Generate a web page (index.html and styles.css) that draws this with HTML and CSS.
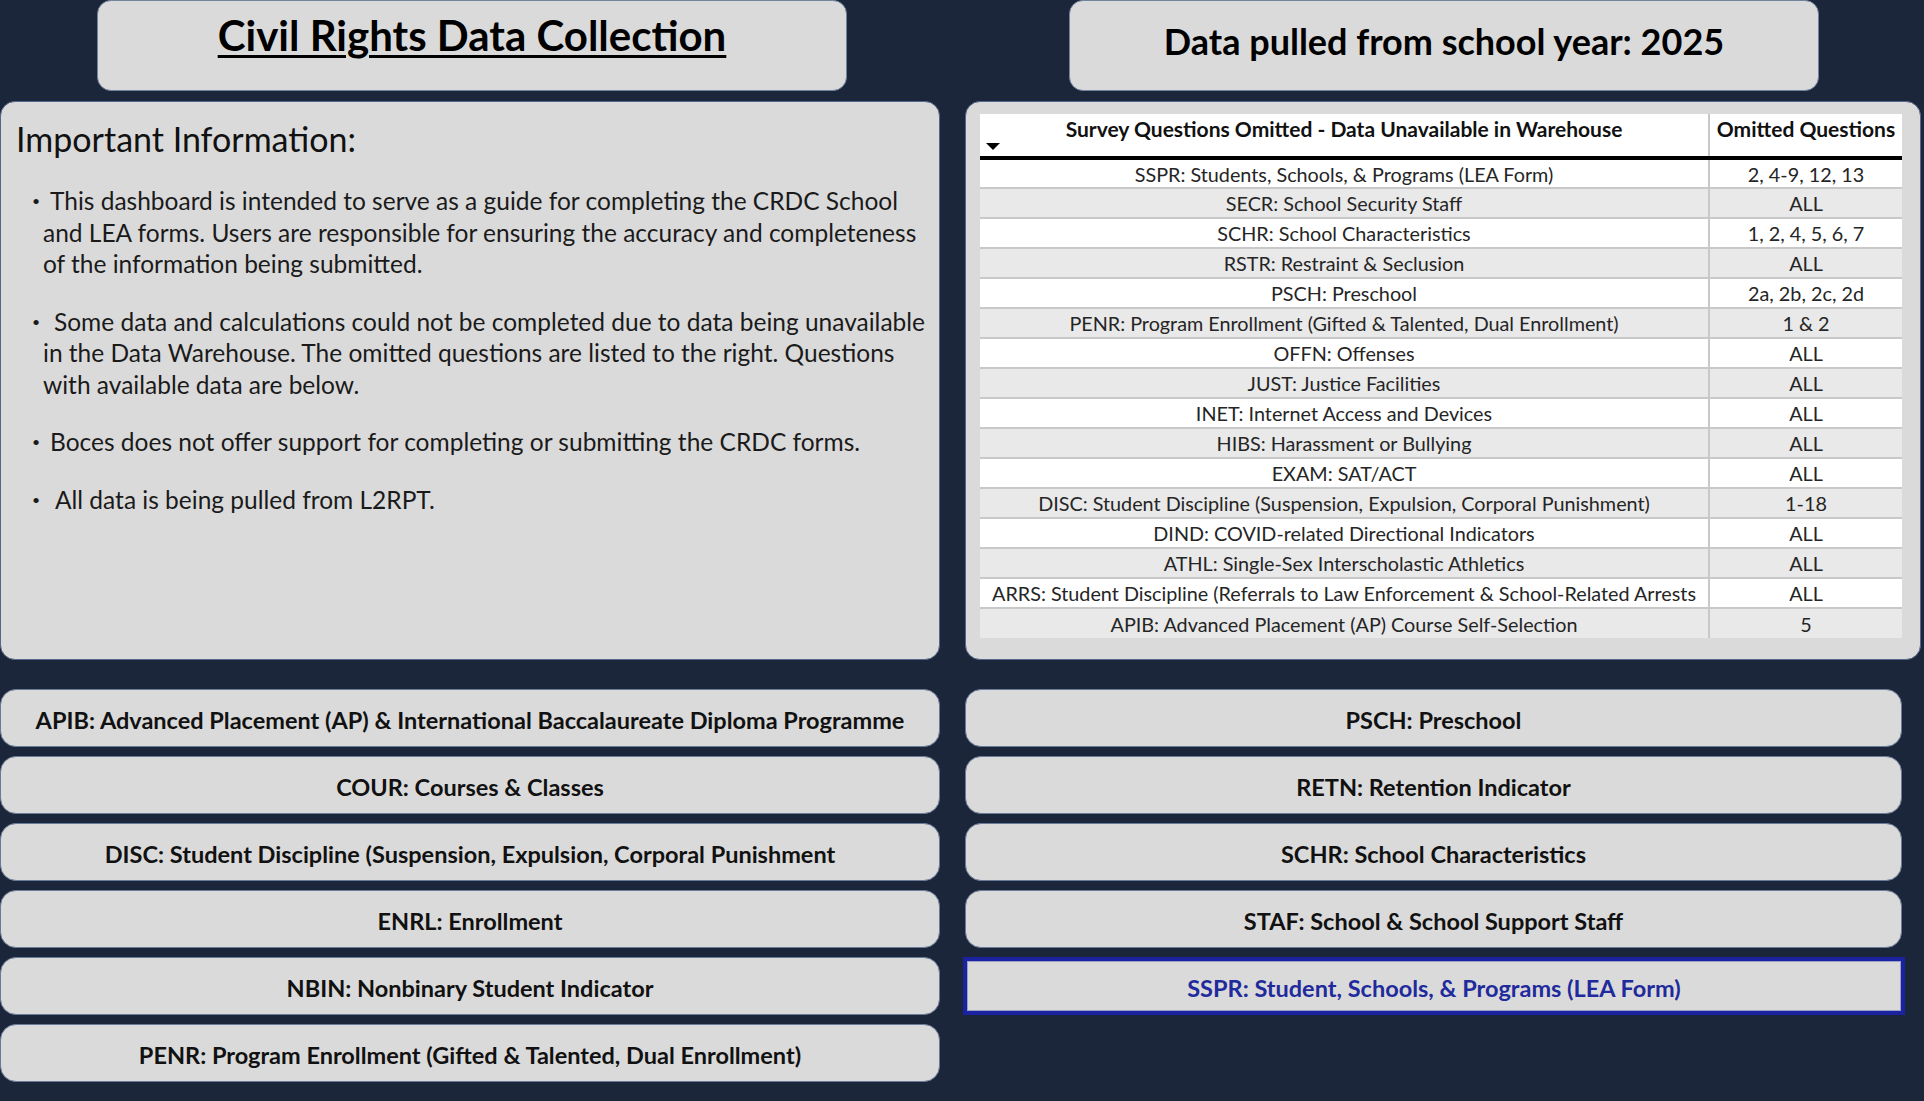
FILE: index.html
```html
<!DOCTYPE html>
<html lang="en">
<head>
<meta charset="utf-8">
<title>Civil Rights Data Collection</title>
<link rel="stylesheet" href="styles.css">
</head>
<body>
<div class="page">
  <div class="title-cell title-cell-left">
    <div class="title-box"><h1 class="title title-main">Civil Rights Data Collection</h1></div>
  </div>
  <div class="title-cell title-cell-right">
    <div class="title-box"><h1 class="title title-year">Data pulled from school year: 2025</h1></div>
  </div>

  <section class="panel info">
    <h2 class="info-heading">Important Information:</h2>
    <p class="bullet"><span class="dot">•</span>This dashboard is intended to serve as a guide for completing the CRDC School<br>and LEA forms. Users are responsible for ensuring the accuracy and completeness<br>of the information being submitted.</p>
    <p class="bullet"><span class="dot dot-2">•</span>Some data and calculations could not be completed due to data being unavailable<br>in the Data Warehouse. The omitted questions are listed to the right. Questions<br>with available data are below.</p>
    <p class="bullet"><span class="dot">•</span>Boces does not offer support for completing or submitting the CRDC forms.</p>
    <p class="bullet"><span class="dot dot-3">•</span>All data is being pulled from L2RPT.</p>
  </section>

  <section class="panel table-panel">
    <table class="omit-table">
      <thead>
        <tr>
          <th class="col-q"><span class="sort-arrow"></span>Survey Questions Omitted - Data Unavailable in Warehouse</th>
          <th class="col-o">Omitted Questions</th>
        </tr>
      </thead>
      <tbody>
        <tr><td>SSPR: Students, Schools, &amp; Programs (LEA Form)</td><td>2, 4-9, 12, 13</td></tr>
        <tr><td>SECR: School Security Staff</td><td>ALL</td></tr>
        <tr><td>SCHR: School Characteristics</td><td>1, 2, 4, 5, 6, 7</td></tr>
        <tr><td>RSTR: Restraint &amp; Seclusion</td><td>ALL</td></tr>
        <tr><td>PSCH: Preschool</td><td>2a, 2b, 2c, 2d</td></tr>
        <tr><td>PENR: Program Enrollment (Gifted &amp; Talented, Dual Enrollment)</td><td>1 &amp; 2</td></tr>
        <tr><td>OFFN: Offenses</td><td>ALL</td></tr>
        <tr><td>JUST: Justice Facilities</td><td>ALL</td></tr>
        <tr><td>INET: Internet Access and Devices</td><td>ALL</td></tr>
        <tr><td>HIBS: Harassment or Bullying</td><td>ALL</td></tr>
        <tr><td>EXAM: SAT/ACT</td><td>ALL</td></tr>
        <tr><td>DISC: Student Discipline (Suspension, Expulsion, Corporal Punishment)</td><td>1-18</td></tr>
        <tr><td>DIND: COVID-related Directional Indicators</td><td>ALL</td></tr>
        <tr><td>ATHL: Single-Sex Interscholastic Athletics</td><td>ALL</td></tr>
        <tr><td>ARRS: Student Discipline (Referrals to Law Enforcement &amp; School-Related Arrests</td><td>ALL</td></tr>
        <tr><td>APIB: Advanced Placement (AP) Course Self-Selection</td><td>5</td></tr>
      </tbody>
    </table>
  </section>

  <div class="btn-list">
    <div class="btn">APIB: Advanced Placement (AP) &amp; International Baccalaureate Diploma Programme</div>
    <div class="btn">COUR: Courses &amp; Classes</div>
    <div class="btn">DISC: Student Discipline (Suspension, Expulsion, Corporal Punishment</div>
    <div class="btn">ENRL: Enrollment</div>
    <div class="btn">NBIN: Nonbinary Student Indicator</div>
    <div class="btn">PENR: Program Enrollment (Gifted &amp; Talented, Dual Enrollment)</div>
  </div>
  <div class="btn-list btn-list-right">
    <div class="btn">PSCH: Preschool</div>
    <div class="btn">RETN: Retention Indicator</div>
    <div class="btn">SCHR: School Characteristics</div>
    <div class="btn">STAF: School &amp; School Support Staff</div>
    <div class="btn btn-selected">SSPR: Student, Schools, &amp; Programs (LEA Form)</div>
  </div>
</div>
</body>
</html>
```
FILE: styles.css
```css
html, body {
  margin: 0;
  padding: 0;
}
body {
  background: #1c263b;
  font-family: Lato, "Noto Sans", sans-serif;
  color: #111111;
  width: 1924px;
  height: 1101px;
  overflow: hidden;
}
.page {
  display: grid;
  grid-template-columns: 940px 956px;
  column-gap: 25px;
  grid-template-rows: 91px 569px auto;
}

/* titles */
.title-cell {
  display: flex;
  justify-content: center;
}
.title-cell-left {
  padding-left: 4px;
}
.title-cell-right {
  padding-left: 2px;
}
.title-box {
  width: 750px;
  height: 91px;
  box-sizing: border-box;
  background: #dadada;
  border: 1px solid #7283a0;
  border-radius: 14px;
  text-align: center;
}
.title {
  margin: 0;
  font-weight: 700;
  line-height: 1;
  color: #000;
}
.title-main {
  font-size: 42px;
  padding-top: 13px;
  text-decoration: underline;
  text-decoration-thickness: 3px;
  text-underline-offset: 4px;
}
.title-year {
  font-size: 36px;
  padding-top: 22px;
}

/* panels */
.panel {
  margin-top: 10px;
  background: #dadada;
  border: 1px solid #56668a;
  border-radius: 15px;
  box-sizing: border-box;
  height: 559px;
}
.info {
  padding: 20px 4px 0 15px;
}
.info-heading {
  margin: 0 0 29px 0;
  font-size: 34px;
  font-weight: 400;
  line-height: 34px;
  color: #111;
}
.bullet {
  margin: 0 0 26px 0;
  padding-left: 27px;
  text-indent: -11px;
  font-size: 24.5px;
  line-height: 31.5px;
  color: #1a1a1a;
  white-space: nowrap;
}
.dot {
  display: inline-block;
  text-indent: 0;
  width: 18px;
  font-size: 14px;
  vertical-align: 4px;
}
.dot-2 {
  width: 22px;
}
.dot-3 {
  width: 23px;
}

/* table */
.table-panel {
  padding: 12px 18px 0 14px;
}
.omit-table {
  width: 100%;
  border-collapse: collapse;
  background: #ffffff;
}
.omit-table th {
  position: relative;
  height: 44px;
  padding: 4px 2px 0 2px;
  box-sizing: border-box;
  vertical-align: top;
  font-size: 21px;
  font-weight: 700;
  line-height: 22px;
  color: #111;
  border-bottom: 4px solid #000;
  text-align: center;
  white-space: nowrap;
}
.omit-table th.col-q {
  width: 729px;
  border-right: 2px solid #c8c8c8;
}
.sort-arrow {
  position: absolute;
  left: 6px;
  top: 29px;
  width: 0;
  height: 0;
  border-left: 7px solid transparent;
  border-right: 7px solid transparent;
  border-top: 7px solid #000;
}
.omit-table td {
  height: 30px;
  box-sizing: border-box;
  padding: 0 4px;
  font-size: 19.8px;
  line-height: 20px;
  color: #252525;
  text-align: center;
  vertical-align: middle;
  border-bottom: 2px solid #c8c8c8;
  white-space: nowrap;
}
.omit-table td:first-child {
  border-right: 2px solid #c8c8c8;
}
.omit-table tbody tr:nth-child(even) td {
  background: #e9e9e9;
}
.omit-table tbody tr:last-child td {
  border-bottom: none;
}

/* buttons */
.btn-list {
  margin-top: 29px;
  display: flex;
  flex-direction: column;
  gap: 9px;
}
.btn-list-right {
  margin-right: 19px;
}
.btn {
  height: 58px;
  box-sizing: border-box;
  background: #dadada;
  border: 1px solid #6a7b99;
  border-radius: 16px;
  display: flex;
  align-items: center;
  justify-content: center;
  padding-top: 4px;
  font-size: 23.5px;
  font-weight: 700;
  color: #111;
  white-space: nowrap;
}
.btn-selected {
  border: 4px solid #1a22a0;
  box-shadow: inset 0 0 0 1px #9aa0c8;
  border-radius: 0;
  margin: 0 -3px 0 -2px;
  color: #1f2a9c;
}
```
